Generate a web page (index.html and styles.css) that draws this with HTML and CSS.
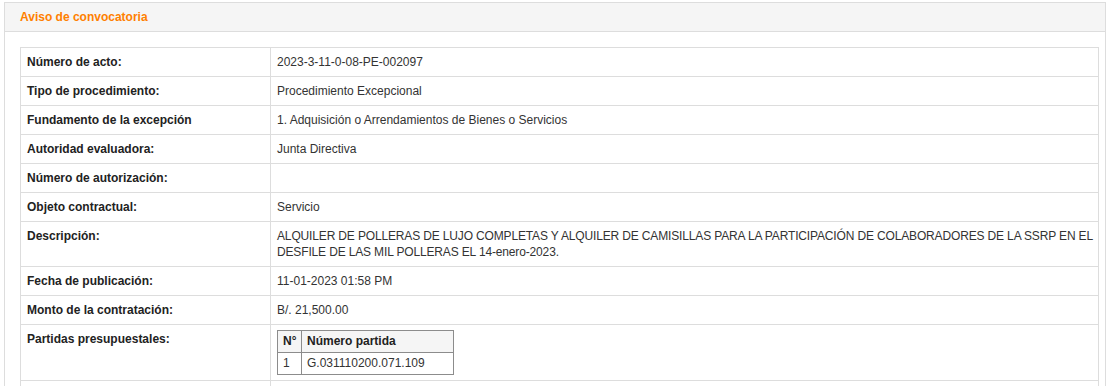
FILE: index.html
```html
<!DOCTYPE html>
<html lang="es">
<head>
    <meta charset="UTF-8">
    <title>Aviso de convocatoria</title>
    <link rel="stylesheet" href="styles.css">
</head>
<body>
    <!-- panel con los datos del acto publico -->
    <div class="panel">
        <div class="panel-heading">Aviso de convocatoria</div>
        <div class="panel-body">
            <table class="detalle">
                <colgroup>
                    <col class="col-label">
                    <col>
                </colgroup>
                <tr>
                    <td class="label">Número de acto:</td>
                    <td>2023-3-11-0-08-PE-002097</td>
                </tr>
                <tr>
                    <td class="label">Tipo de procedimiento:</td>
                    <td>Procedimiento Excepcional</td>
                </tr>
                <tr>
                    <td class="label">Fundamento de la excepción</td>
                    <td>1. Adquisición o Arrendamientos de Bienes o Servicios</td>
                </tr>
                <tr>
                    <td class="label">Autoridad evaluadora:</td>
                    <td>Junta Directiva</td>
                </tr>
                <tr>
                    <td class="label">Número de autorización:</td>
                    <td></td>
                </tr>
                <tr>
                    <td class="label">Objeto contractual:</td>
                    <td>Servicio</td>
                </tr>
                <tr>
                    <td class="label">Descripción:</td>
                    <td class="descripcion">ALQUILER DE POLLERAS DE LUJO COMPLETAS Y ALQUILER DE CAMISILLAS PARA LA PARTICIPACIÓN DE COLABORADORES DE LA SSRP EN EL DESFILE DE LAS MIL POLLERAS EL 14-enero-2023.</td>
                </tr>
                <tr>
                    <td class="label">Fecha de publicación:</td>
                    <td>11-01-2023 01:58 PM</td>
                </tr>
                <tr>
                    <td class="label">Monto de la contratación:</td>
                    <td>B/. 21,500.00</td>
                </tr>
                <tr>
                    <td class="label">Partidas presupuestales:</td>
                    <td class="con-tabla">
                        <table class="partidas">
                            <colgroup>
                                <col class="col-num">
                                <col class="col-partida">
                            </colgroup>
                            <tr>
                                <th>N°</th>
                                <th>Número partida</th>
                            </tr>
                            <tr>
                                <td>1</td>
                                <td>G.031110200.071.109</td>
                            </tr>
                        </table>
                    </td>
                </tr>
                <tr>
                    <td class="label">&nbsp;</td>
                    <td>&nbsp;</td>
                </tr>
            </table>
        </div>
    </div>
</body>
</html>
```

FILE: styles.css
```css
body {
    margin: 2px 0 0 4px;
    font-family: 'Liberation Sans', Arial, Helvetica, sans-serif;
    font-size: 12px;
    line-height: 16px;
    color: #333;
    background-color: #fff;
}
.panel {
    border: 1px solid #ddd;
    background-color: #fff;
}
.panel-heading {
    padding: 6px 15px;
    background-color: #f5f5f5;
    border-bottom: 1px solid #ddd;
    color: #ff8000;
    font-weight: bold;
}
.panel-body {
    padding: 15px 6px 0 15px;
}
.detalle {
    width: 1079px;
    border-collapse: collapse;
    table-layout: fixed;
}
.col-label {
    width: 250px;
}
.detalle > tbody > tr > td {
    border: 1px solid #ddd;
    padding: 6px 5px 6px 6px;
    vertical-align: top;
}
.detalle td.label {
    font-weight: bold;
    color: #222;
}
/* las mayusculas largas van un poco mas juntas */
.detalle td.descripcion {
    letter-spacing: -0.15px;
}
.detalle td.con-tabla {
    padding-top: 5px;
    padding-bottom: 5px;
}
.partidas {
    border-collapse: collapse;
    table-layout: fixed;
    width: 177px;
}
.col-num {
    width: 24px;
}
.partidas th,
.partidas td {
    border: 1px solid #8c8c8c;
    padding: 3px 5px;
    line-height: 15px;
    text-align: left;
}
.partidas th {
    background-color: #f5f5f5;
    font-weight: bold;
    color: #222;
}
```
